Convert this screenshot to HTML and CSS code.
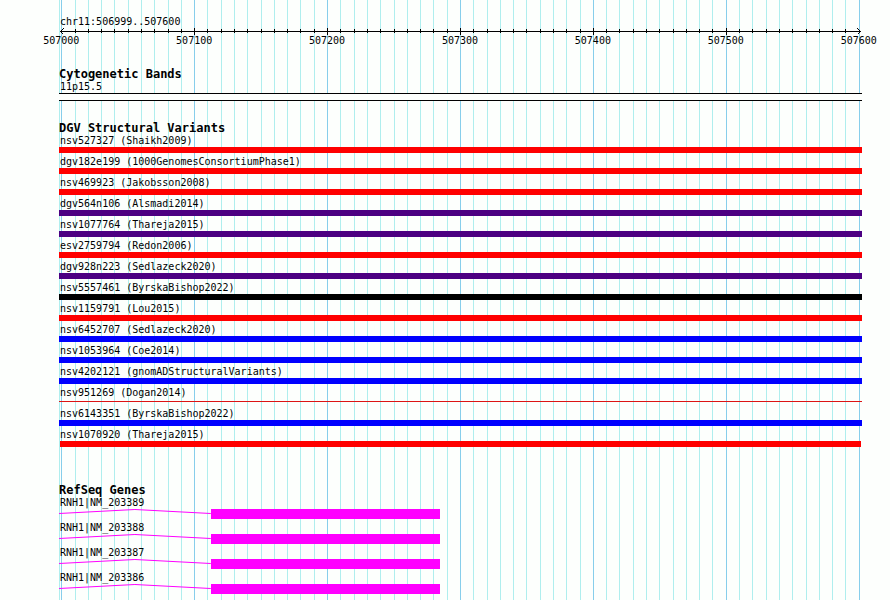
FILE: index.html
```
<!DOCTYPE html>
<html lang="en">
	<head>
		<meta charset="utf-8">
		<title>chr11:506999..507600</title>
		<link rel="stylesheet" href="styles.css">
	</head>
	<body>
		<div id="browser">
			<div id="grid"></div>

			<section class="ruler">
				<div class="label">chr11:506999..507600</div>
				<div class="axis" id="axis">
					<svg class="arrow" width="4" height="7" viewBox="0 0 4 7"><path d="M3.5 0.5L0.5 3.5L3.5 6.5"/></svg>
					<svg class="arrow" width="4" height="7" viewBox="0 0 4 7"><path d="M0.5 0.5L3.5 3.5L0.5 6.5"/></svg>
				</div>
				<div class="positions" id="positions"></div>
			</section>

			<section class="cytoband">
				<h2>Cytogenetic Bands</h2>
				<div class="label">11p15.5</div>
				<div class="band"></div>
			</section>

			<section class="variants">
				<h2>DGV Structural Variants</h2>
				<ul>
					<li><span class="label">nsv527327 (Shaikh2009)</span><div class="bar red"></div></li>
					<li><span class="label">dgv182e199 (1000GenomesConsortiumPhase1)</span><div class="bar red"></div></li>
					<li><span class="label">nsv469923 (Jakobsson2008)</span><div class="bar red"></div></li>
					<li><span class="label">dgv564n106 (Alsmadi2014)</span><div class="bar indigo"></div></li>
					<li><span class="label">nsv1077764 (Thareja2015)</span><div class="bar indigo"></div></li>
					<li><span class="label">esv2759794 (Redon2006)</span><div class="bar red"></div></li>
					<li><span class="label">dgv928n223 (Sedlazeck2020)</span><div class="bar indigo"></div></li>
					<li><span class="label">nsv5557461 (ByrskaBishop2022)</span><div class="bar black"></div></li>
					<li><span class="label">nsv1159791 (Lou2015)</span><div class="bar red"></div></li>
					<li><span class="label">nsv6452707 (Sedlazeck2020)</span><div class="bar blue"></div></li>
					<li><span class="label">nsv1053964 (Coe2014)</span><div class="bar blue"></div></li>
					<li><span class="label">nsv4202121 (gnomADStructuralVariants)</span><div class="bar blue"></div></li>
					<li><span class="label">nsv951269 (Dogan2014)</span><div class="bar thin"></div></li>
					<li><span class="label">nsv6143351 (ByrskaBishop2022)</span><div class="bar blue"></div></li>
					<li><span class="label">nsv1070920 (Thareja2015)</span><div class="bar red inset"></div></li>
				</ul>
			</section>

			<section class="genes">
				<h2>RefSeq Genes</h2>
				<ul>
					<li>
						<span class="label">RNH1|NM_203389</span>
						<div class="gene">
							<svg class="intron" viewBox="0 0 152 10" preserveAspectRatio="none"><polyline points="0,4.5 76,0.5 152,4.5"/></svg>
							<div class="exon"></div>
						</div>
					</li>
					<li>
						<span class="label">RNH1|NM_203388</span>
						<div class="gene">
							<svg class="intron" viewBox="0 0 152 10" preserveAspectRatio="none"><polyline points="0,4.5 76,0.5 152,4.5"/></svg>
							<div class="exon"></div>
						</div>
					</li>
					<li>
						<span class="label">RNH1|NM_203387</span>
						<div class="gene">
							<svg class="intron" viewBox="0 0 152 10" preserveAspectRatio="none"><polyline points="0,4.5 76,0.5 152,4.5"/></svg>
							<div class="exon"></div>
						</div>
					</li>
					<li>
						<span class="label">RNH1|NM_203386</span>
						<div class="gene">
							<svg class="intron" viewBox="0 0 152 10" preserveAspectRatio="none"><polyline points="0,4.5 76,0.5 152,4.5"/></svg>
							<div class="exon"></div>
						</div>
					</li>
				</ul>
			</section>
		</div>
		<script src="script.js"></script>
	</body>
</html>
```
FILE: styles.css
```
body {
	margin:0;
	background-color:#fdfffd;
	color:#000;
	font-family:"DejaVu Sans Mono", "Liberation Mono", monospace;
	font-size:10px;
	line-height:12px;
}

#browser {
	position:relative;
	box-sizing:border-box;
	min-height:100vh;
	margin:0 28px 0 59px;
	padding:16px 0 6px;
}

#grid {
	position:absolute;
	top:0;
	right:0;
	bottom:0;
	left:0;
	z-index:-1;
}

.line {
	position:absolute;
	top:0;
	bottom:0;
	width:1px;
	background-color:#afeeee;
}

.line.major {
	background-color:#87ceeb;
}

h2 {
	margin:0;
	font-size:12px;
	line-height:14px;
	font-weight:bold;
}

ul {
	display:flex;
	flex-direction:column;
	gap:3px;
	margin:0;
	padding:0;
	list-style:none;
}

.label {
	display:block;
	padding-left:1px;
	white-space:nowrap;
}

/* ruler */
.axis {
	position:relative;
	display:flex;
	justify-content:space-between;
	height:7px;
	padding:0 1px;
	background:linear-gradient(#000, #000) center / calc(100% - 2px) 1px no-repeat;
}

.arrow path {
	fill:none;
	stroke:#000;
	shape-rendering:crispEdges;
}

.tick {
	position:absolute;
	top:1px;
	bottom:2px;
	width:1px;
	background-color:#000;
}

.tick.major {
	top:0;
	bottom:0;
}

.positions {
	position:relative;
	height:12px;
}

.position {
	position:absolute;
	transform:translateX(-50%);
}

.cytoband {
	margin-top:20px;
}

.band {
	height:6px;
	border:solid #000;
	border-width:1px 0;
	background-color:#fdfffd;
}

/* variants */
.variants {
	margin-top:20px;
}

.bar {
	height:6px;
}

.red { background-color:#ff0000; }
.blue { background-color:#0000ff; }
.indigo { background-color:#4b0082; }
.black { background-color:#000; }

.thin {
	background:linear-gradient(#dc1414, #dc1414) center 2px / 100% 1px no-repeat;
}

.inset {
	margin:0 1px;
}

/* genes */
.genes {
	margin-top:36px;
}

.gene {
	display:flex;
	height:10px;
}

.intron {
	width:18.9%;
	height:10px;
}

.intron polyline {
	fill:none;
	stroke:#ff00ff;
	shape-rendering:crispEdges;
}

.exon {
	width:28.5%;
	background-color:#ff00ff;
}
```
FILE: script.js
```
var grid = document.getElementById("grid");
var axis = document.getElementById("axis");
var positions = document.getElementById("positions");

// share of the track width taken by the first line and by each 10 bp step
var first = 0.282;
var step = 1.6551;

function add(parent, className, left, text) {
	var el = document.createElement("span");
	el.className = className;
	el.style.left = left + "%";
	if(text) { el.textContent = text; }
	parent.appendChild(el);
}

add(grid, "line", 0);

for(var i = 0; i <= 60; i++) {
	var left = first + i * step;
	var major = i % 10 == 0 ? " major" : "";
	add(grid, "line" + major, left);
	if(i > 0 && i < 60) { add(axis, "tick" + major, left); }
	if(major) { add(positions, "position", left, String(507000 + i * 10)); }
}
```
